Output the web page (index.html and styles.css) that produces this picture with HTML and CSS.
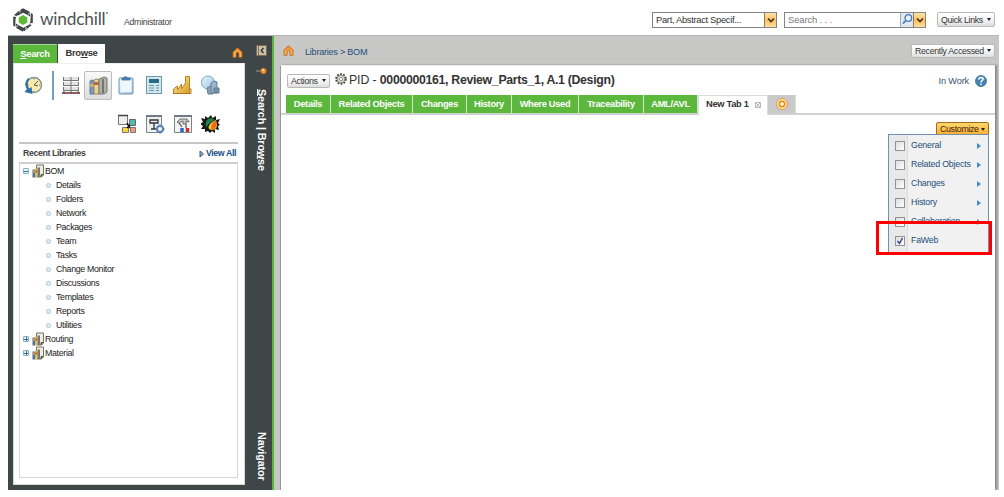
FILE: index.html
```html
<!DOCTYPE html>
<html lang="en">
<head>
<meta charset="utf-8">
<title>Windchill</title>
<link rel="stylesheet" href="styles.css">
</head>
<body>
<svg class="defs" width="0" height="0">
  <defs>
    <linearGradient id="gold" x1="0" y1="0" x2="1" y2="1"><stop offset="0" stop-color="#fff0b0"/><stop offset="1" stop-color="#d99a20"/></linearGradient>
    <linearGradient id="blue" x1="0" y1="0" x2="1" y2="1"><stop offset="0" stop-color="#eaf6fd"/><stop offset="1" stop-color="#9cc4e0"/></linearGradient>
    <linearGradient id="flame" x1="0" y1="0" x2="0" y2="1"><stop offset="0" stop-color="#f58a2c"/><stop offset="1" stop-color="#ffc050"/></linearGradient>
    <symbol id="home" viewBox="0 0 11 11"><path d="M5.500 .8 1 5v5.300h3.100V6.800q0-1.500 1.400-1.500t1.400 1.500v3.500H10V5Z" fill="url(#flame)" stroke="#b9601c" stroke-width=".8"/></symbol>
    <symbol id="book" viewBox="0 0 12 14"><path d="M4.500 1h7v10L9.500 13H4.500Z" fill="#ecebe4" stroke="#777562"/><path d="M9 13v-2.500h2.500" fill="#666" stroke="#555"/><path d="M.5 5.500h2.500v8h-2.500Z" fill="#4a6fae"/><path d="M.5 6.500h2.500v2h-2.500Z" fill="#d5a848"/><path d="M3 4.500h2.500v9h-2.500Z" fill="#e3bf50"/><path d="M3 6.500h2.500v2h-2.500Z" fill="#c9683b"/><path d="M5.500 3.500h2.500v9.500h-2.500Z" fill="#77796f"/></symbol>
  </defs>
</svg>
<div class="app">
  <header class="top">
    <svg class="logo" viewBox="0 0 20 24"><g fill="#3f4748"><path d="M10 .2 17 4v4.400L15 7.200 8 3.400V1.400Z"/><path d="M17.800 5 19.800 6v9l-4 2.200 1.700-4.200Z"/><path d="m19 16.800-7.500 6.500-3.600-2 7-4.100Z"/><path d="m10 23.800-7.200-4v-4.300l7.500 4.200Z"/><path d="M2.200 18.800.2 17.500V8.600l4-2.200-1.700 4.800Z"/><path d="M1 7 8 1.200 11.600 4 5 7.400Z"/></g><path d="m10 7 4.300 2.500v5l-4.300 2.500-4.300-2.500v-5Z" fill="#5cb936"/><path d="M7 0v4.500M18.500 3.500 15 6.500M20 16l-4.500-1.200M13 24v-5M1.500 20.500 5 17.500M0 8l4.500 1" stroke="#fff" stroke-width=".9"/></svg>
    <span class="brand">windchill<i></i></span>
    <span class="user">Administrator</span>
    <div class="combo type"><span>Part, Abstract Specif...</span><b class="drop"><svg viewBox="0 0 10 10"><path d="m2 3.500 3 3 3-3" /></svg></b></div>
    <div class="combo find"><span>Search . . .</span><b class="lens"><svg viewBox="0 0 12 14"><circle cx="7.300" cy="5" r="3.300" fill="#e8f4ff" stroke="#3d78bc" stroke-width="1.300"/><path d="M5 7.500 2 10.500" stroke="#3d78bc" stroke-width="1.700"/></svg></b><b class="drop"><svg viewBox="0 0 10 10"><path d="m2 3.500 3 3 3-3"/></svg></b></div>
    <button class="btn quick"><span>Quick Links</span><i class="caret"></i></button>
  </header>
  <div class="body">
    <aside class="nav">
      <div class="navmain">
        <div class="navtabs"><span class="nt search"><u>S</u>earch</span><span class="nt browse">Bro<u>w</u>se</span><svg class="navhome" width="11" height="11"><use href="#home"/></svg></div>
        <div class="panel">
          <div class="tools">
            <svg class="ic clock" viewBox="0 0 20 20"><circle cx="11" cy="10" r="7.500" fill="#f8e9ad" stroke="#8b9698" stroke-width="1.500"/><path d="m15 6-4 4 4 1" fill="none" stroke="#555"/><path d="M11 3v1.500M11 16v1.500M5 10h1M16 10h1" stroke="#8e8254"/><path d="M5 3Q0 9 4 14l-2.500 3 8 2-1-7-2.300 1.500Q3 9 6.500 4Z" fill="#2c72a9"/></svg>
            <i class="rule"></i>
            <svg class="ic grid" viewBox="0 0 20 20"><path d="M2 4h16M2 9h16M2 14h16" stroke="#777" stroke-width="4"/><path d="M3 3.500h14M3 8.500h14M3 13.500h14" stroke="#e2e2e2" stroke-width="3"/><path d="M10 2v14" stroke="#777"/><path d="M3 16v2M10 16v2M17 16v2" stroke="#555"/><path d="M1 18h18" stroke="#71373a" stroke-width="1.600"/></svg>
            <span class="selected"><svg class="ic" viewBox="0 0 20 20"><path d="M2 5q2-2 4 0v13H2Z" fill="#7b99cc" stroke="#5c76a0"/><path d="M2 8h4v3H2Z" fill="#cdb073"/><path d="M6 4q2-2 5 0v14H6Z" fill="#e8d68c" stroke="#9b8a58"/><path d="M6 6h5v3H6Z" fill="#c4643f"/><path d="m11 3 5-2 3 1v14l-3 2h-5Z" fill="#b0b2a8" stroke="#777b71"/><path d="M15 3v14" stroke="#71776f" stroke-width="2"/></svg></span>
            <svg class="ic" viewBox="0 0 20 20"><rect x="3" y="3" width="14" height="16" rx="1" fill="url(#blue)" stroke="#6a92b4" stroke-width="1"/><path d="M4.500 5h11v12h-11Z" fill="#eff8fe"/><path d="M6 5V3h2q0-3 4 0h2v2Z" fill="#477eb3" stroke="#4a7097" stroke-width=".8"/></svg>
            <svg class="ic" viewBox="0 0 20 20"><rect x="2.500" y="1.500" width="15" height="17" fill="#d1e5ed" stroke="#6b9bab"/><path d="M5 4h10v4H5Z" fill="#266b84"/><path d="M5 10.500h5M5 13h5M5 15.500h5M12 10.500h3M12 13h3M12 15.500h3" stroke="#6799a9"/></svg>
            <svg class="ic" viewBox="0 0 20 20"><path d="M1.500 18.500V14l4-3v4l4-6v5l4-6V1.500h4v17Z" fill="url(#gold)" stroke="#b98318"/><path d="M1 18.500h18V14h-2" stroke="#ac761a" fill="none"/></svg>
            <svg class="ic" viewBox="0 0 20 20"><circle cx="8" cy="7.500" r="6.500" fill="url(#blue)" stroke="#6fa8ca"/><path d="m7 13 4-2 2 1v7H8Z" fill="#87a2b8" stroke="#627f97"/><path d="m11 8 3-2 3 1v11h-6Z" fill="#9cb5c9" stroke="#627f97"/><path d="M14 13h5v5h-5Z" fill="#7390a8" stroke="#627f97"/></svg>
          </div>
          <div class="tools second">
            <svg class="ic" viewBox="0 0 20 20"><path d="M1.500 1.500h9v9h-9Z" fill="#edf0f2" stroke="#777"/><path d="M1 1.500h10" stroke="#444" stroke-width="1.500"/><path d="M12.500 5.500h6v6h-6Z" fill="#54b9b2" stroke="#666"/><path d="M5.500 13.500h6v5h-6Z" fill="#fbd53c" stroke="#777"/><path d="M13.500 13.500h5v5h-5Z" fill="#f79a77" stroke="#777"/><path d="M10 9l3 5M13 11l-3 3" stroke="#111" stroke-width="1.500"/></svg>
            <svg class="ic" viewBox="0 0 20 20"><path d="M1.500 1.500h15v17h-15Z" fill="#eef1f4" stroke="#788"/><path d="M1 2h16" stroke="#778" stroke-width="2"/><path d="M5 6h8v3H5ZM9 9v6M6 15h5" fill="#eef" stroke="#333" stroke-width="1.300"/><circle cx="15" cy="15" r="3" fill="#fff" stroke="#5d80b5" stroke-width="2"/><path d="M15 10v2M15 18v2M10 15h2M18 15h2" stroke="#5d80b5"/></svg>
            <svg class="ic" viewBox="0 0 20 20"><path d="M1.500 1.500h17v17h-17Z" fill="#f3f3f3" stroke="#788"/><path d="M1 2h18" stroke="#778" stroke-width="2"/><path d="m4 8 3-3h7l2 3-3-1v3h-3V7L5 9Z" fill="#ccc" stroke="#555" stroke-width=".8"/><path d="M6 9l3 4M13 9v5" stroke="#777" stroke-width="1.500"/><path d="M9 14v4" stroke="#2866d4" stroke-width="3.500"/><path d="M14.500 14v4" stroke="#d92c2c" stroke-width="3.500"/></svg>
            <svg class="ic" viewBox="0 0 20 20"><path d="m10 1 1.500 3L15 2v4l4-1-2 4 2 2-2 1 1 4-4-1v4l-3-2-2 2-2-2-3 1V15l-4 0 2-3-3-2 3-2-2-4 4 1V2l3 2Z" fill="#171a12"/><path d="M10 4Q3 5 5 14q2-5 9-8Z" fill="#20804d"/><path d="M15 6Q6 10 8 15q6 3 8-3Z" fill="#f2cf2a"/><path d="M15 6q-7 5-4 10 6-2 4-10Z" fill="#f06a25"/></svg>
          </div>
          <div class="recent"><b>Recent Libraries</b><span class="va"><svg viewBox="0 0 5 8"><path d="M1 1v6L4.500 4Z" fill="#9ab" stroke="#345d82"/></svg><b>View All</b></span></div>
          <div class="tree">
            <div class="node"><i class="exp"></i><svg class="bk"><use href="#book"/></svg>BOM</div>
            <div class="leaf">Details</div><div class="leaf">Folders</div><div class="leaf">Network</div><div class="leaf">Packages</div><div class="leaf">Team</div><div class="leaf">Tasks</div><div class="leaf">Change Monitor</div><div class="leaf">Discussions</div><div class="leaf">Templates</div><div class="leaf">Reports</div><div class="leaf">Utilities</div>
            <div class="node"><i class="exp plus"></i><svg class="bk"><use href="#book"/></svg>Routing</div>
            <div class="node"><i class="exp plus"></i><svg class="bk"><use href="#book"/></svg>Material</div>
          </div>
        </div>
      </div>
      <div class="rail">
        <svg class="collapse" viewBox="0 0 11 11"><path d="M.5.5h10v10H.5Z" fill="#c6c0ad" stroke="#826a4a"/><path d="M2.500 1v9" stroke="#7d705e"/><path d="m7.500 3-2.300 2.500 2.300 2.500" fill="none" stroke="#333" stroke-width="1.400"/></svg>
        <svg class="pin" viewBox="0 0 11 8"><path d="M0 4h6" stroke="#999" /><circle cx="7.500" cy="4" r="2.900" fill="#ef9b34" stroke="#9b581c" stroke-width=".7"/><circle cx="7" cy="3" r="1.100" fill="#ffe0a0"/></svg>
        <span class="vert sb"><u>S</u>earch | Bro<u>w</u>se</span>
        <span class="vert ng">Navigator</span>
      </div>
    </aside>
    <main class="main">
      <div class="crumbs"><svg class="home2"><use href="#home"/></svg><span class="path">Libraries &gt; BOM</span><button class="btn recently"><span>Recently Accessed</span><i class="caret"></i></button></div>
      <section class="page">
        <div class="title">
          <button class="btn actions"><span>Actions</span><i class="caret"></i></button>
          <svg class="gear" viewBox="0 0 12 12"><circle cx="6" cy="6" r="4.900" fill="none" stroke="#444" stroke-width="1.800" stroke-dasharray="1.800 1.280"/><circle cx="6" cy="6" r="3.900" fill="#dfe2d2" stroke="#666" stroke-width=".8"/><circle cx="6" cy="6" r="1.700" fill="#fff" stroke="#777" stroke-width=".8"/></svg>
          <h1><span class="pid">PID - </span><span class="name">0000000161, Review_Parts_1, A.1 (Design)</span></h1>
          <span class="state">In Work</span>
          <svg class="help" viewBox="0 0 12 12"><circle cx="6" cy="6" r="5.500" fill="#4383b4" stroke="#3f6c90" stroke-width=".8"/><path d="M2 5a4.200 4.200 0 0 1 8 0Q6 3 2 5Z" fill="#83b3d5"/><path d="M4 4.500q0-2 2-2t2 1.700q0 1-1.200 1.700Q6 6.400 6 7.400M6 8.600v1.300" fill="none" stroke="#fff" stroke-width="1.400"/></svg>
        </div>
        <nav class="tabs"><span class="t1">Details</span><span class="t2">Related Objects</span><span class="t3">Changes</span><span class="t4">History</span><span class="t5">Where Used</span><span class="t6">Traceability</span><span class="t7">AML/AVL</span><span class="t8">New Tab 1<svg viewBox="0 0 6 6"><path d="M.5.5h5v5h-5ZM1 1l4 4M5 1 1 5" fill="none" stroke="#999" stroke-width=".7"/></svg></span><span class="t9"><svg viewBox="0 0 12 12"><circle cx="6" cy="6" r="5.500" fill="#fff2da" stroke="#dd983f"/><circle cx="6" cy="6" r="3.700" fill="#f39518"/><path d="M6 4v4M4 6h4" stroke="#fff" stroke-width="1.300"/></svg></span></nav>
        <div class="work">
          <button class="custom"><span>Customize</span><i class="caret"></i></button>
          <div class="menu">
            <div class="mi"><i class="cb"></i><span>General</span><i class="arr"></i></div>
            <div class="mi"><i class="cb"></i><span>Related Objects</span><i class="arr"></i></div>
            <div class="mi"><i class="cb"></i><span>Changes</span><i class="arr"></i></div>
            <div class="mi"><i class="cb"></i><span>History</span><i class="arr"></i></div>
            <div class="mi"><i class="cb"></i><span>Collaboration</span><i class="arr"></i></div>
            <div class="mi"><i class="cb"><svg viewBox="0 0 8 8"><path d="m1.500 4 2 2.500L6.500 1" fill="none" stroke="#34458d" stroke-width="1.500"/></svg></i><span>FaWeb</span></div>
            <div class="mark"></div>
          </div>
        </div>
      </section>
    </main>
  </div>
</div>
</body>
</html>
```
FILE: styles.css
```css
*{box-sizing:border-box}
body{margin:0;background:#fff;font:8.8px/14px "Liberation Sans",Arial,sans-serif;letter-spacing:-.32px;color:#222;overflow:hidden}
button{font:inherit;letter-spacing:inherit;margin:0}
svg{display:block;flex:none}
.defs{position:absolute}
.app{width:1004px;height:497px;padding:0 5px 7px 8px;display:flex;flex-direction:column}
.top{height:36px;display:flex;align-items:flex-start;border-bottom:1px solid #b4b6b6}
.logo{width:20px;height:24px;margin:8px 0 0 5px}
.brand{font:17.3px/22px Lato,sans-serif;color:#4c5254;margin:8px 0 0 7px;width:77px;white-space:nowrap;display:flex;letter-spacing:-.2px}
.brand i{width:2px;height:2px;border-radius:1px;background:#777;margin:4px 0 0 1px}
.user{margin:15px 0 0 7px;width:528px;color:#444;white-space:nowrap}
.combo{height:16px;margin-top:12px;border:1px solid #858585;display:flex;font-size:9.4px;letter-spacing:-.32px;line-height:14px;white-space:nowrap;color:#333}
.combo span{flex:1;padding-left:3px}
.type{width:125px}
.find{width:142px;margin-left:7px}
.find span{color:#777;letter-spacing:-.1px}
.drop{width:12px;border-left:1px solid #8d7a5b;background:linear-gradient(#ffe2a6,#ffc160 55%,#ffe09b);display:flex;align-items:center;justify-content:center}
.drop svg{width:10px;height:10px;fill:none;stroke:#423420;stroke-width:1.7}
.lens{width:13px;border-left:1px solid #aaa;background:#dfe8f0}
.lens svg{width:12px;height:14px}
.btn{display:flex;align-items:center;justify-content:space-between;background:linear-gradient(#fff,#f3f3f3 55%,#dedede);border:1px solid #b9b9b9;border-radius:2px;color:#333;white-space:nowrap;padding:0 3px;line-height:12px;height:14px}
.caret{width:0;height:0;border:2px solid transparent;border-top:3px solid #222;border-bottom:0}
.quick{width:58px;height:15px;margin:12px 0 0 11px}
.body{flex:1;display:flex;min-height:0}
.nav{width:266px;background:#3e4647;border-right:2px solid #55b536;display:flex}
.navmain{width:237px;padding:8px 0 5px 5px;display:flex;flex-direction:column}
.navtabs{display:flex;height:19px;line-height:18px;font-weight:bold;font-size:9.4px}
.nt{text-align:center;white-space:nowrap}
.search{width:44px;background:#5cb73d;color:#fff;border-top:1px solid #a7d49a;line-height:17px}
.browse{width:47px;margin-left:1px;background:#fff;color:#333}
.navhome{margin:3px 0 0 127px;width:11px;height:11px}
.panel{flex:1;background:#fff;border:1px solid #d6d8d8;border-top-color:#eee;padding:6px 6px 6px 5px;display:flex;flex-direction:column}
.tools{display:flex;align-items:center;height:30px;padding-left:4px;gap:8px}
.tools .ic{width:20px;height:20px}
.tools .clock{margin-right:1px}
.tools .grid{margin-left:1px;margin-right:-1px}
.rule{width:2px;height:29px;background:#73a0c4;margin-right:-2px}
.selected{width:28px;height:29px;border:1px solid #bbb;border-radius:2px;background:linear-gradient(#f9f9f9,#ddd);padding:4px 3px;margin:0 -4px}
.second{margin-top:9px;padding-left:98px;height:29px}
.recent{border-top:2px solid #c5c5c5;margin-top:4px;height:22px;display:flex;justify-content:space-between;line-height:19px;padding:0 2px 0 4px;color:#444;letter-spacing:-.4px}
.va{display:flex;align-items:center;height:19px;color:#174f89;gap:2px}
.va svg{width:5px;height:8px}
.tree{flex:1;border:1px solid #d7d7d7;border-top:2px solid #cfcfcf;margin-top:-2px}
.node,.leaf{height:14px;line-height:14px;white-space:nowrap}
.node{display:flex;padding-left:3px}
.exp{width:6px;height:6px;border:1px solid #86b0c8;border-radius:1px;background:linear-gradient(#356f91,#356f91) 50% 50%/4px 1px no-repeat #e8f4fb;margin-top:4px}
.plus{background:linear-gradient(#356f91,#356f91) 50% 50%/4px 1px no-repeat,linear-gradient(#356f91,#356f91) 50% 50%/1px 4px no-repeat,#e8f4fb}
.bk{width:12px;height:14px;margin:0 1px 0 3px}
.leaf{padding-left:27px;display:flex;align-items:center}
.leaf::before{content:"";width:3px;height:3px;outline:1px solid #a5c6d6;outline-offset:-.5px;border-radius:50%;margin-right:6px;background:#dceff8}
.rail{flex:1;padding-top:9px;display:flex;flex-direction:column;align-items:center;color:#fff}
.collapse{width:11px;height:11px;margin-left:5px}
.pin{width:11px;height:8px;margin:11px 0 0 5px}
.vert{writing-mode:vertical-rl;font-weight:bold;font-size:10.8px;letter-spacing:-.15px;line-height:12px;margin-left:7px;white-space:nowrap}
.vert u{text-underline-offset:-1.5px;text-decoration-thickness:1px}
.sb{margin-top:14px}
.ng{margin-top:auto;margin-bottom:10px}
.main{flex:1;background:#c7c7c5;display:flex;flex-direction:column;padding:0 4px 0 6px;overflow:hidden}
.crumbs{height:29px;display:flex;align-items:center;padding-left:3px;color:#254f7a}
.home2{width:11px;height:11px}
.path{margin-left:11px;flex:1;padding-top:2px;font-size:9.1px;letter-spacing:-.25px}
.recently{width:84px}
.page{flex:1;background:#fff;border-left:1px solid #999;border-top:1px solid #eee;box-shadow:2px 0 2px #888;display:flex;flex-direction:column}
.title{display:flex;align-items:center;height:29px;padding:0 8px 0 6px}
.actions{width:43px}
.gear{width:12px;height:12px;margin-left:5px;margin-top:-3px}
h1{font-size:12.3px;line-height:16px;margin:-1px 0 0 2px;flex:1;white-space:pre;color:#333;font-weight:normal;letter-spacing:-.31px}
.pid{letter-spacing:-.1px}
.name{font-weight:bold}
.state{color:#3a536d;font-size:9.2px;letter-spacing:-.15px}
.help{width:12px;height:12px;margin-left:6px}
.tabs{height:20px;display:flex;border-bottom:2px solid #d1d1d1;padding-left:5px;line-height:18px;font-weight:bold;font-size:9.3px;letter-spacing:-.3px}
.tabs span{background:#5cb73d;color:#fff;height:18px;text-align:center;white-space:nowrap;border-right:1px solid #d2e6cc}
.t1{width:45px}.t2{width:82px}.t3{width:54px}.t4{width:45px}.t5{width:67px}.t6{width:65px}.t7{width:54px}
.tabs .t8{width:70px;height:20px;background:#fff;color:#333;border:1px solid #ddd;border-bottom:0;display:flex;align-items:center;padding:0 0 3px 7px}
.t8 svg{width:6px;height:6px;margin-left:6px;margin-top:1px}
.tabs .t9{width:28px;background:#c9c9c9;display:flex;align-items:center;justify-content:center}
.t9 svg{width:12px;height:12px}
.work{flex:1;position:relative;padding:7px 6px 0 0;display:flex;flex-direction:column;align-items:flex-end}
.custom{width:53px;height:14px;border:1px solid #a26b17;border-radius:2px 2px 0 0;background:linear-gradient(#ffd76d,#ffad2f);display:flex;align-items:center;justify-content:space-between;padding:0 3px;color:#332511}
.menu{position:absolute;top:19px;right:6px;width:101px;height:120px;background:linear-gradient(90deg,#e9e9e9 18px,#dcdcdc 18px,#dcdcdc 19px,#f1f1f1 19px);border:1px solid #718fae;padding-top:1px}
.mi{height:19px;display:flex;align-items:center;padding:0 7px 0 6px;color:#254f78}
.cb{width:10px;height:10px;border:1px solid #929292;background:linear-gradient(135deg,#ddd,#fff)}
.mi span{margin-left:6px;flex:1;white-space:nowrap;padding-bottom:1px;letter-spacing:-.2px}
.arr{border:3px solid transparent;border-left:4px solid #438bd0;border-right:0}
.mark{position:absolute;left:-13px;top:86px;width:116px;height:34px;border:3px solid #f00}
```
